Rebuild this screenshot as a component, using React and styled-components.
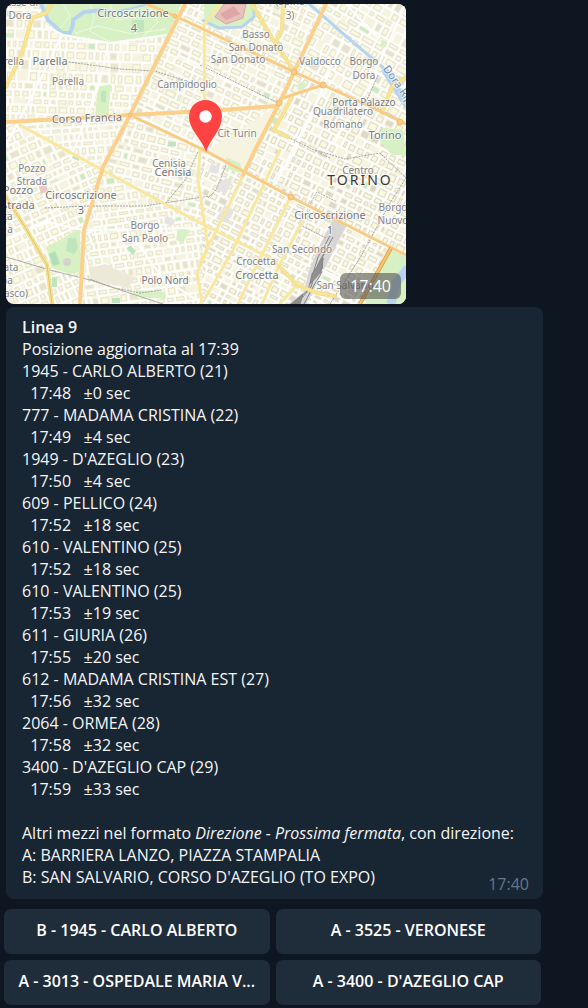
import React from "react";
import styled, { createGlobalStyle } from "styled-components";

const GlobalStyle = createGlobalStyle`
  * { box-sizing: border-box; }
  body {
    margin: 0;
    background: #0e1621;
    color: #f5f5f5;
    font-family: "Open Sans", "Noto Sans", sans-serif;
    font-size: 16px;
    line-height: 22px;
  }
`;

const Chat = styled.main`
  display: flex;
  flex-direction: column;
  padding: 4px 45px 3px 6px;
`;

const MapBubble = styled.figure`
  position: relative;
  width: 100%;
  max-width: 400px;
  margin: 0 0 3px;
  border-radius: 8px;
  overflow: hidden;

  svg { display: block; width: 100%; height: auto; }
`;

const MapTime = styled.time`
  position: absolute;
  right: 5px;
  bottom: 5px;
  padding: 2px 10px;
  border-radius: 6px;
  background: rgba(84, 84, 80, 0.6);
  color: #fff;
`;

const MapLabel = styled.text`
  font-family: "Noto Sans", "Open Sans", sans-serif;
  font-size: ${(p) => p.$size}px;
  fill: ${(p) => p.$color};
  stroke: rgba(255, 255, 255, 0.6);
  stroke-width: 2px;
  stroke-linejoin: round;
  paint-order: stroke;
  text-anchor: middle;
  letter-spacing: ${(p) => (p.$city ? "2px" : "normal")};
`;

const TextBubble = styled.article`
  position: relative;
  padding: 9px 16px 11px;
  border-radius: 8px;
  background: #182533;
`;

const Line = styled.p`
  margin: 0;
  min-height: 22px;
  white-space: pre-wrap;
`;

const Title = styled(Line)`
  font-weight: 600;
`;

const SentTime = styled.time`
  position: absolute;
  right: 14px;
  bottom: 4px;
  color: #667788;
`;

const Keyboard = styled.div`
  display: grid;
  grid-template-columns: repeat(2, minmax(0, 1fr));
  gap: 6px;
  margin: 10px 2px 0 -2px;
`;

const KeyButton = styled.button`
  height: 45px;
  padding: 0 8px 4px;
  border: 0;
  border-radius: 7px;
  background: #1f2c3a;
  color: #fff;
  font: inherit;
  font-weight: 600;
  white-space: nowrap;
  overflow: hidden;
  text-overflow: ellipsis;
  cursor: pointer;
`;

/* Builds a repeatable street grid: white streets with outlined blocks between them. */
function buildGrid(seed, x0, y0, w, h, cw, ch) {
  let s = seed;
  const rnd = () => {
    s = (s * 16807) % 2147483647;
    return s / 2147483647;
  };
  let streets = "";
  let blocks = "";
  let solid = "";
  let greens = "";
  let y = y0;
  while (y < y0 + h) {
    const rh = Math.round(ch * (0.75 + rnd() * 0.6));
    let x = x0;
    while (x < x0 + w) {
      const rw = Math.round(cw * (0.6 + rnd() * 0.9));
      const k = rnd();
      if (rnd() < 0.92) streets += `M${x} ${y}h${rw}`;
      if (rnd() < 0.92) streets += `M${x} ${y}v${rh}`;
      const box = `M${x + 2} ${y + 2}h${rw - 4}v${rh - 4}h${4 - rw}z`;
      if (k > 0.985) greens += box;
      else if (k > 0.85) solid += box;
      else if (k > 0.14) blocks += box;
      x += rw;
    }
    y += rh;
  }
  return { streets, blocks, solid, greens };
}

const districts = [
  { id: "nw", clip: "6,4 185,4 130,115 6,122", rotate: 2, seed: 71, cw: 8, ch: 9, wall: "#e9e5cf" },
  { id: "w", clip: "6,122 130,115 104,167 67,150 20,125", rotate: -4, seed: 19, cw: 8, ch: 8, wall: "#e9e5cf" },
  { id: "n", clip: "185,4 326,4 280,104 206,151 130,115", rotate: 25, seed: 37, cw: 9, ch: 7, wall: "#e5e0cd" },
  { id: "ne", clip: "326,4 406,4 406,124 294,72", rotate: 30, seed: 53, cw: 10, ch: 9, wall: "#e6e0d0" },
  { id: "c", clip: "294,72 406,124 406,255 243,175", rotate: 26, seed: 91, cw: 8, ch: 8, wall: "#dfd8c8" },
  { id: "sw", clip: "6,122 20,125 104,167 80,304 6,304", rotate: -24, seed: 23, cw: 8, ch: 8, wall: "#e8e3cd" },
  { id: "s", clip: "104,167 163,203 208,228 204,304 80,304", rotate: -8, seed: 67, cw: 8, ch: 8, wall: "#e8e3ce" },
  { id: "m", clip: "104,167 130,115 206,151 200,228", rotate: 14, seed: 83, cw: 9, ch: 7, wall: "#e6e1cf" },
  { id: "se", clip: "200,150 406,255 406,304 203,304", rotate: 27, seed: 47, cw: 8, ch: 7, wall: "#e0dac8" },
].map((d) => ({ ...d, grid: buildGrid(d.seed, -80, -180, 600, 600, d.cw, d.ch) }));

const yellowRoads = [
  "M52 4L46 13L32 18L22 53L6 87",
  "M6 197L25 227L47 265L52 304",
  "M252 4L273 40L294 71",
  "M283 4L282 30L275 43",
  "M292 97L274 130L288 137",
  "M280 267L297 285L317 293L335 296",
  "M406 77L392 87L382 113",
];

const thinYellowRoads = [
  "M20 125L75 155L163 203L210 228L270 258L280 267",
  "M220 4L204 25L205 115",
  "M243 175L235 193L209 245L200 262",
  "M200 150L198 180L208 247L197 273L202 304",
  "M297 285L280 304",
  "M280 150L233 250L206 297",
  "M290 198L243 293L238 304",
  "M302 222L280 264L262 304",
];

const orangeRoads = [
  "M185 4L130 115L103 167L84 230L80 304",
  "M6 122L60 119L130 115L222 110L278 106",
  "M326 4L294 72L280 102L255 150L243 175",
];

const slimOrangeRoads = [
  "M147 4L175 16L294 72L323 85L367 105L406 124",
  "M130 115L206 151L291 197L406 255",
  "M280 99L323 85",
];

const railways = [
  "M69 62L120 69L155 71L195 84",
  "M200 65L278 103M288 137L330 158",
  "M45 208L85 206L145 206L210 196",
  "M90 279L115 288L140 293L162 290",
  "M198 152L185 180L166 203",
  "M226 165L216 190L208 198",
  "M378 75L366 102L400 120",
  "M310 204L317 192L337 202",
  "M300 225L326 238",
  "M315 150L345 159L380 153L406 178L390 203L360 258L330 304",
];

const grey = "#83848a";
const strong = "#76777f";

/* text, centre x, baseline y, size, colour */
const labels = [
  ["asse di", 22, 6, 10, grey],
  ["Dora", 20, 19, 10, grey],
  ["Circoscrizione", 133, 17, 11, strong],
  ["4", 134, 32, 11, strong],
  ["Parella", 8, 65, 10, grey],
  ["Parella", 50, 65, 11, strong],
  ["Parella", 68, 85, 10, grey],
  ["Campidoglio", 187, 88, 10, grey],
  ["(Spina", 290, 5, 10, grey],
  ["3)", 290, 19, 10, grey],
  ["Basso", 256, 38, 10, grey],
  ["San Donato", 256, 51, 10, grey],
  ["San Donato", 238, 63, 10, grey],
  ["Valdocco", 320, 65, 10, grey],
  ["Borgo", 364, 65, 10, grey],
  ["Dora", 364, 79, 10, grey],
  ["Porta Palazzo", 364, 106, 10, strong],
  ["Quadrilatero", 343, 115, 10, grey],
  ["Romano", 343, 128, 10, grey],
  ["Torino", 385, 139, 11, strong],
  ["Cit Turin", 237, 137, 10, grey],
  ["Pozzo", 32, 172, 10, grey],
  ["Strada", 32, 185, 10, grey],
  ["Pozzo", 18, 194, 11, strong],
  ["Strada", 18, 209, 11, strong],
  ["ta", 8, 220, 10, grey],
  ["a", 10, 233, 10, grey],
  ["Circoscrizione", 81, 199, 11, strong],
  ["3", 81, 214, 11, strong],
  ["Cenisia", 169, 167, 10, grey],
  ["Cenisia", 173, 176, 11, strong],
  ["Borgo", 145, 229, 10, grey],
  ["San Paolo", 145, 242, 10, grey],
  ["Polo Nord", 165, 284, 10, strong],
  ["ata", 11, 271, 10, grey],
  ["na", 7, 284, 10, grey],
  ["asco)", 16, 297, 10, grey],
  ["Centro", 358, 174, 10, grey],
  ["Circoscrizione", 330, 219, 11, strong],
  ["1", 330, 234, 11, strong],
  ["San Secondo", 302, 253, 10, grey],
  ["Borgo", 393, 211, 10, grey],
  ["Nuovo", 393, 224, 10, grey],
  ["Crocetta", 256, 265, 10, grey],
  ["Crocetta", 257, 279, 11, strong],
  ["San Salvario", 345, 289, 10, grey],
];

function Roads({ paths, casing, color, width }) {
  const d = paths.join("");
  return (
    <g fill="none" strokeLinejoin="round" strokeLinecap="round">
      <path d={d} stroke={casing} strokeWidth={width + 1} />
      <path d={d} stroke={color} strokeWidth={width} />
    </g>
  );
}

function CityMap() {
  return (
    <svg viewBox="6 4 400 300" role="img" aria-label="Mappa di Torino">
      <defs>
        {districts.map((d) => (
          <clipPath id={`clip-${d.id}`} key={d.id}>
            <polygon points={d.clip} />
          </clipPath>
        ))}
      </defs>
      <rect x="6" y="4" width="400" height="300" fill="#f6f4e1" />
      {districts.map((d) => (
        <g clipPath={`url(#clip-${d.id})`} key={d.id}>
          <g transform={`rotate(${d.rotate} 206 154)`} fill="none">
            <path d={d.grid.greens} fill="#c9eac2" />
            <path d={d.grid.solid} fill={d.wall} />
            <path d={d.grid.blocks} fill="#fbf9e0" stroke={d.wall} strokeWidth="1" />
            <path d={d.grid.streets} stroke="#fff" strokeWidth="2" opacity="0.85" />
          </g>
        </g>
      ))}

      {/* Parks */}
      <g fill="#d7f1c4">
        <path d="M48 4H181L167 37L135 39L110 44L88 38L62 36L49 22L40 4z" />
        <path d="M204 4H255L253 20L240 27L218 30L204 24z" />
        <path d="M98 87L111 84L108 116L95 115z" />
        <path d="M46 247L60 240L80 228L81 272L70 274L52 268z" />
        <path d="M226 157L240 163L243 174L228 169z" />
        <path d="M382 128L403 130L406 155L392 155L380 142z" />
        <path d="M391 249L406 257V304H365z" />
        <path d="M178 228L190 230L183 243L176 240z" />
        <path d="M136 290L165 292L166 299L135 296z" />
        <path d="M6 33H14V37H6z" />
        <path d="M298 84l5-3 4 4-4 5-6-1zM382 40l8 3-4 5-6-3z" />
      </g>
      <g fill="#bfe5bf">
        <path d="M132 20h12v14h-12zM168 142h8v4h-8zM68 238h8l2 10-4 6-8-3zM130 245l6 6-3 4-6-6zM52 277h5v10h-5zM73 155l7 2-1 4-7-3zM112 298h8v5h-8zM101 91h5v11h-5z" />
      </g>
      <path d="M63 4L70 16L60 28M90 4L94 18L90 31L110 42M110 4L116 20L145 15M150 8L158 22L143 37M75 33L98 26L132 34L166 29" fill="none" stroke="#edf8e3" />
      <path d="M49 254L55 251L60 264L53 266z" fill="#b2dfb8" />
      <circle cx="67" cy="262" r="4" fill="#d2d5cf" />
      <path d="M224 4H246L243 18L226 24L215 17z" fill="#e9c1bb" stroke="#d8a9a5" />
      <path d="M220 14L234 6L240 14L226 20z" fill="#dca7a4" />
      <path d="M89 268L105 264L135 278L128 288L112 284L91 281z" fill="#ece9d8" />
      <path d="M39 187l7-2 2 6-7 3z" fill="#eacbc4" />

      {/* Rivers */}
      <g fill="none" stroke="#b7d4ee">
        <path d="M40 2L48 20L62 33L70 33L73 25L73 20L84 12L102 10" strokeWidth="4" />
        <path d="M102 10L115 12L145 5L150 2" strokeWidth="2" />
        <path d="M202 20L219 28L242 27L254 17L254 3" strokeWidth="3" />
        <path d="M307 2L347 37L387 71L408 108" strokeWidth="3" />
        <path d="M408 268L396 283L391 304" strokeWidth="9" />
        <path d="M384 69L408 107" strokeWidth="7" />
      </g>

      {/* Rail yard */}
      <path d="M333 219L347 225L338 242L326 266L322 272L314 290L306 304H288L304 292L309 270L318 249z" fill="#d8d6d4" />
      <g fill="none" stroke="#858686" strokeWidth="1">
        <path d="M330 236L318 257L308 290L292 304M333 237L318 264L311 287L297 304M328 246L311 281M323 258L322 272L313 287L304 304" />
        <path d="M323 258L312 274L310 284L321 272zM303 294L291 304H300z" fill="#8f8f8e" />
      </g>

      {/* Boulevards and minor avenues */}
      <g fill="none" stroke="#fff" strokeWidth="2">
        <path d="M62 35L34 92L6 145M45 26L63 35L110 43L167 35M108 45L99 85L70 160M346 4L377 37M406 4L365 95L323 155M323 90L290 155L275 185M6 240L48 222L83 230M135 240L153 265L163 278L200 302M178 55L210 70L255 93M343 39L310 118L285 170M83 230L200 228M322 270L370 293" />
      </g>
      <g fill="#e6e3e4">
        <path d="M219 184l7-6 6 4-6 11-10-3zM225 205l9 5-7 13-11-4zM166 216l10 4-4 6-8-3zM211 164l9 3-4 7-8-2z" />
      </g>

      <path d={railways.join("")} fill="none" stroke="#a4a4a0" strokeWidth="1" strokeDasharray="2 1" />
      <path d="M6 257L50 270L90 280L163 304" fill="none" stroke="#adada8" />

      <Roads paths={thinYellowRoads} casing="#f5e9b8" color="#fbe79a" width={2} />
      <Roads paths={yellowRoads} casing="#ecd98e" color="#fae491" width={3} />
      <path d="M6 197L25 227L47 265L52 304" fill="none" stroke="#d9c36d" />
      <Roads paths={slimOrangeRoads} casing="#f7d49b" color="#fbca80" width={2} />
      <Roads paths={orangeRoads} casing="#f8d49a" color="#fdcf88" width={3} />
      <path d="M391 248L360 304" stroke="#dca74e" strokeWidth="4" />
      <path d="M391 248L360 304" stroke="#f7c46f" strokeWidth="2" />
      <g fill="#f9cd88" stroke="#efbb70">
        <circle cx="175" cy="16" r="2" />
        <circle cx="130" cy="115" r="2" />
        <circle cx="294" cy="72" r="3" />
        <circle cx="323" cy="85" r="3" />
        <circle cx="279" cy="103" r="3" />
        <circle cx="291" cy="197" r="3" />
        <circle cx="400" cy="122" r="3" />
      </g>

      {labels.map(([text, x, y, size, color], i) => (
        <MapLabel key={i} x={x} y={y} $size={size} $color={color}>
          {text}
        </MapLabel>
      ))}
      <MapLabel x="87" y="122" $size={11} $color={strong} transform="rotate(-2 87 122)">
        Corso Francia
      </MapLabel>
      <MapLabel x="401" y="95" $size={11} $color="#7492b8" transform="rotate(55 401 95)">
        Dora Riparia
      </MapLabel>
      <MapLabel x="360" y="185" $size={14} $color="#3a3a3e" $city>
        TORINO
      </MapLabel>

      {/* Location pin */}
      <path
        d="M206 152C202 139 189 130 189 116.500A16.500 16.500 0 0 1 222 116.500C222 130 210 139 206 152z"
        fill="#ff4343"
      />
      <circle cx="205.500" cy="116.500" r="6.200" fill="#fff" />
    </svg>
  );
}

const stops = [
  ["1945 - CARLO ALBERTO (21)", "17:48", "±0 sec"],
  ["777 - MADAMA CRISTINA (22)", "17:49", "±4 sec"],
  ["1949 - D'AZEGLIO (23)", "17:50", "±4 sec"],
  ["609 - PELLICO (24)", "17:52", "±18 sec"],
  ["610 - VALENTINO (25)", "17:52", "±18 sec"],
  ["610 - VALENTINO (25)", "17:53", "±19 sec"],
  ["611 - GIURIA (26)", "17:55", "±20 sec"],
  ["612 - MADAMA CRISTINA EST (27)", "17:56", "±32 sec"],
  ["2064 - ORMEA (28)", "17:58", "±32 sec"],
  ["3400 - D'AZEGLIO CAP (29)", "17:59", "±33 sec"],
];

const keys = [
  "B - 1945 - CARLO ALBERTO",
  "A - 3525 - VERONESE",
  "A - 3013 - OSPEDALE MARIA V...",
  "A - 3400 - D'AZEGLIO CAP",
];

export default function App() {
  return (
    <>
      <GlobalStyle />
      <Chat>
        <MapBubble>
          <CityMap />
          <MapTime>17:40</MapTime>
        </MapBubble>
        <TextBubble>
          <Title>Linea 9</Title>
          <Line>Posizione aggiornata al 17:39</Line>
          {stops.map(([stop, time, error], i) => (
            <React.Fragment key={i}>
              <Line>{stop}</Line>
              <Line>{`  ${time}   ${error}`}</Line>
            </React.Fragment>
          ))}
          <Line />
          <Line>
            Altri mezzi nel formato <em>Direzione - Prossima fermata</em>, con direzione:
          </Line>
          <Line>A: BARRIERA LANZO, PIAZZA STAMPALIA</Line>
          <Line>B: SAN SALVARIO, CORSO D'AZEGLIO (TO EXPO)</Line>
          <SentTime>17:40</SentTime>
        </TextBubble>
        <Keyboard>
          {keys.map((label) => (
            <KeyButton type="button" key={label}>
              {label}
            </KeyButton>
          ))}
        </Keyboard>
      </Chat>
    </>
  );
}
